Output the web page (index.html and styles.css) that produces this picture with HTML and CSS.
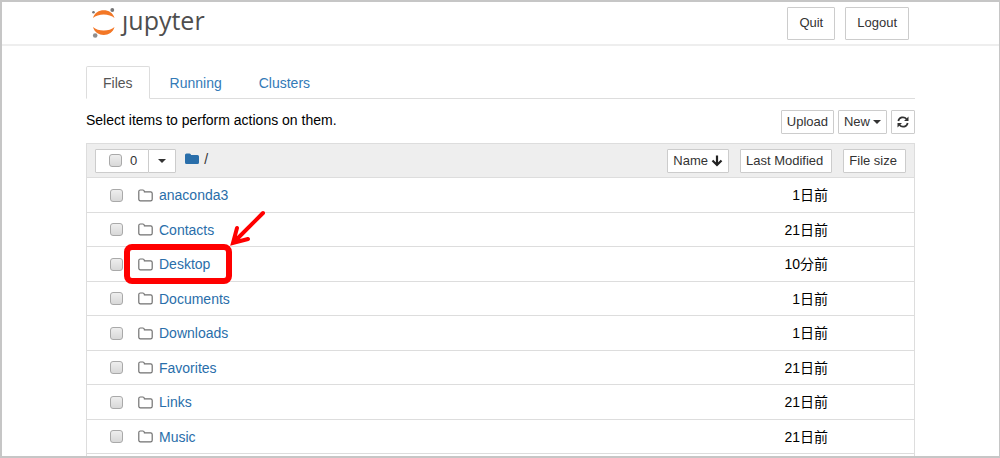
FILE: index.html
```html
<!DOCTYPE html>
<html lang="en">

<head>
    <meta charset="UTF-8">
    <meta name="viewport" content="width=device-width, initial-scale=1.0">
    <title>Home</title>
    <link rel="stylesheet" href="styles.css">
</head>

<body>
    <svg width="0" height="0" class="symbols" aria-hidden="true">
        <symbol id="folder" viewBox="0 0 15 13">
            <path d="M.8 10V2.600Q.8 1 2.400 1H4.800Q6.200 1 6.400 2.800H12.600Q14.200 2.800 14.200 4.400V10.200Q14.200 11.800 12.600 11.800H2.400Q.8 11.800 .8 10Z" fill="none" stroke="#707070" stroke-width="1.200" />
        </symbol>
    </svg>

    <header class="header">
        <div class="container header-inner">
            <a class="logo" href="#" aria-label="jupyter">
                <svg width="24" height="32" viewBox="0 0 24 32" aria-hidden="true">
                    <path d="M1 11C3.500 .5 20 .5 22.500 11C17.500 6.200 6 6.200 1 11Z" fill="#f37726" />
                    <path d="M1 20C3.500 30.500 20 30.500 22.500 20C17.500 24.800 6 24.800 1 20Z" fill="#f37726" />
                    <circle cx="20.300" cy="3" r="1.900" fill="#767677" />
                    <circle cx="1.500" cy="5.300" r="1.300" fill="#767677" />
                    <circle cx="3.200" cy="28.500" r="2.300" fill="#8e8e8e" />
                </svg>
                <span class="logo-text">ȷupyter</span>
            </a>
            <div class="header-buttons">
                <button class="btn btn-lg">Quit</button>
                <button class="btn btn-lg">Logout</button>
            </div>
        </div>
    </header>

    <main class="container">
        <nav class="tabs">
            <a class="tab active" href="#files">Files</a>
            <a class="tab" href="#running">Running</a>
            <a class="tab" href="#clusters">Clusters</a>
        </nav>

        <div class="toolbar">
            <span class="hint">Select items to perform actions on them.</span>
            <div class="toolbar-buttons">
                <button class="btn">Upload</button>
                <button class="btn">New <span class="caret"></span></button>
                <button class="btn" aria-label="Refresh">
                    <svg width="12" height="12" viewBox="0 0 12 12" aria-hidden="true">
                        <path d="M1.300 5A4.700 4.700 0 0 1 9.500 3M10.700 7A4.700 4.700 0 0 1 2.500 9" fill="none" stroke="#333" stroke-width="1.700" />
                        <path d="M11.500 .5V5H7ZM.5 11.500V7H5Z" fill="#333" />
                    </svg>
                </button>
            </div>
        </div>

        <div class="list">
            <div class="list-header">
                <div class="select-group">
                    <label class="btn select-all"><input class="check" type="checkbox"> 0</label>
                    <button class="btn select-menu" aria-label="Select by type"><span class="caret"></span></button>
                </div>
                <a class="crumb" href="#" aria-label="Home folder">
                    <svg width="14" height="12" viewBox="0 0 14 12" aria-hidden="true">
                        <path d="M0 2Q0 .5 1.500 .5H4.500Q6 .5 6 2H12.500Q14 2 14 3.500V9.500Q14 11 12.500 11H1.500Q0 11 0 9.500Z" fill="#296eaa" />
                    </svg>
                </a>
                <span class="slash">/</span>
                <div class="sort-buttons">
                    <button class="btn">Name
                        <svg width="12" height="12" viewBox="0 0 12 12" aria-hidden="true">
                            <path d="M6 .5V10M1.500 5.500L6 10L10.500 5.500" fill="none" stroke="#222" stroke-width="2.200" />
                        </svg>
                    </button>
                    <button class="btn sort-wide">Last Modified</button>
                    <button class="btn sort-wide">File size</button>
                </div>
            </div>

            <div class="row">
                <input class="check" type="checkbox" aria-label="anaconda3">
                <a class="item" href="#"><svg class="folder" aria-hidden="true"><use href="#folder" /></svg>anaconda3</a>
                <span class="date">1日前</span>
            </div>
            <div class="row">
                <input class="check" type="checkbox" aria-label="Contacts">
                <a class="item" href="#"><svg class="folder" aria-hidden="true"><use href="#folder" /></svg>Contacts</a>
                <span class="date">21日前</span>
            </div>
            <div class="row">
                <input class="check" type="checkbox" aria-label="Desktop">
                <a class="item marked" href="#"><svg class="folder" aria-hidden="true"><use href="#folder" /></svg>Desktop
                    <svg class="arrow" width="38" height="38" viewBox="0 0 38 38" aria-hidden="true">
                        <path d="M34 3L6 31M8 18L4 33L19 29" fill="none" stroke="#f00" stroke-width="4" stroke-linecap="round" />
                    </svg>
                </a>
                <span class="date">10分前</span>
            </div>
            <div class="row">
                <input class="check" type="checkbox" aria-label="Documents">
                <a class="item" href="#"><svg class="folder" aria-hidden="true"><use href="#folder" /></svg>Documents</a>
                <span class="date">1日前</span>
            </div>
            <div class="row">
                <input class="check" type="checkbox" aria-label="Downloads">
                <a class="item" href="#"><svg class="folder" aria-hidden="true"><use href="#folder" /></svg>Downloads</a>
                <span class="date">1日前</span>
            </div>
            <div class="row">
                <input class="check" type="checkbox" aria-label="Favorites">
                <a class="item" href="#"><svg class="folder" aria-hidden="true"><use href="#folder" /></svg>Favorites</a>
                <span class="date">21日前</span>
            </div>
            <div class="row">
                <input class="check" type="checkbox" aria-label="Links">
                <a class="item" href="#"><svg class="folder" aria-hidden="true"><use href="#folder" /></svg>Links</a>
                <span class="date">21日前</span>
            </div>
            <div class="row">
                <input class="check" type="checkbox" aria-label="Music">
                <a class="item" href="#"><svg class="folder" aria-hidden="true"><use href="#folder" /></svg>Music</a>
                <span class="date">21日前</span>
            </div>
        </div>
    </main>
</body>

</html>
```
FILE: styles.css
```css
* {
    box-sizing: border-box;
}

body {
    display: flex;
    flex-direction: column;
    margin: 0;
    min-height: 100vh;
    border: 2px solid #c6c6c6;
    border-right-width: 1px;
    background: #fff;
    color: #000;
    font-family: "Liberation Sans", Arial, "Noto Sans CJK JP", sans-serif;
    font-size: 14px;
    line-height: 20px;
}

a {
    color: #337ab7;
    text-decoration: none;
}

.symbols {
    position: absolute;
}

.container {
    width: 100%;
    max-width: 829px;
    margin: 0 auto;
}

/* header */
.header {
    border-bottom: 2px solid #eee;
}

.header-inner {
    display: flex;
    align-items: center;
    justify-content: space-between;
    height: 42px;
    padding: 0 6px;
}

.logo {
    display: flex;
    align-items: center;
    gap: 6px;
    color: #4e4e4e;
}

.logo-text {
    font-family: "Open Sans", "Noto Sans", sans-serif;
    font-size: 25px;
    line-height: 32px;
    padding-bottom: 6px;
}

.header-buttons {
    display: flex;
    gap: 10px;
}

/* buttons */
.btn {
    display: flex;
    align-items: center;
    gap: 3px;
    height: 24px;
    padding: 0 5px;
    border: 1px solid #ccc;
    border-radius: 1px;
    background: #fff;
    color: #333;
    font-family: inherit;
    font-size: 13px;
    line-height: 20px;
}

.btn-lg {
    height: 33px;
    padding: 0 11px;
}

.caret {
    border: 4px solid transparent;
    border-top-color: #333;
    border-bottom: 0;
}

.check {
    appearance: none;
    flex: none;
    width: 13px;
    height: 13px;
    margin: 0;
    border: 1px solid #a9a9a9;
    border-radius: 3px;
    background: linear-gradient(#eee, #d8d8d8);
}

.check:checked {
    background: #337ab7;
}

/* tabs */
.tabs {
    display: flex;
    gap: 3px;
    margin-top: 20px;
    border-bottom: 1px solid #ddd;
}

.tab {
    margin-bottom: -1px;
    padding: 6px 16px 5px;
    border: 1px solid transparent;
    border-radius: 2px 2px 0 0;
}

.tab.active {
    border-color: #ddd;
    border-bottom-color: #fff;
    background: #fff;
    color: #555;
}

.toolbar {
    display: flex;
    align-items: flex-start;
    justify-content: space-between;
    padding: 11px 0 9px;
}

.toolbar-buttons {
    display: flex;
    gap: 4px;
}

/* file list */
main {
    display: flex;
    flex: 1;
    flex-direction: column;
}

.list {
    flex: 1;
    border: 1px solid #ddd;
    border-bottom: 0;
}

.list-header {
    display: flex;
    align-items: center;
    height: 34px;
    padding: 0 8px;
    border-bottom: 1px solid #ddd;
    background: #eee;
}

.select-group {
    display: flex;
}

.select-all {
    gap: 8px;
    padding: 0 11px 0 13px;
}

.select-menu {
    margin-left: -1px;
    padding: 0 9px;
}

.crumb {
    display: flex;
    margin: 0 5px 4px 9px;
}

.slash {
    margin-bottom: 4px;
    color: #333;
}

.sort-buttons {
    display: flex;
    gap: 11px;
    margin-left: auto;
}

.sort-wide {
    padding-right: 8px;
}

.row {
    display: flex;
    align-items: center;
    height: 34px;
    padding: 0 86px 0 23px;
    border-bottom: 1px solid #ddd;
}

.row:nth-child(even) {
    height: 35px;
}

.item {
    display: flex;
    align-items: center;
    gap: 6px;
    margin-left: 15px;
    color: #296eaa;
}

.folder {
    width: 15px;
    height: 13px;
}

.date {
    margin-left: auto;
}

/* red frame and arrow laid over one item */
.marked {
    position: relative;
}

.marked::after {
    content: "";
    position: absolute;
    inset: -10px -22px -10px -14px;
    border: 6px solid #f00;
    border-radius: 8px;
}

.arrow {
    position: absolute;
    left: 91px;
    top: -44px;
}
```
